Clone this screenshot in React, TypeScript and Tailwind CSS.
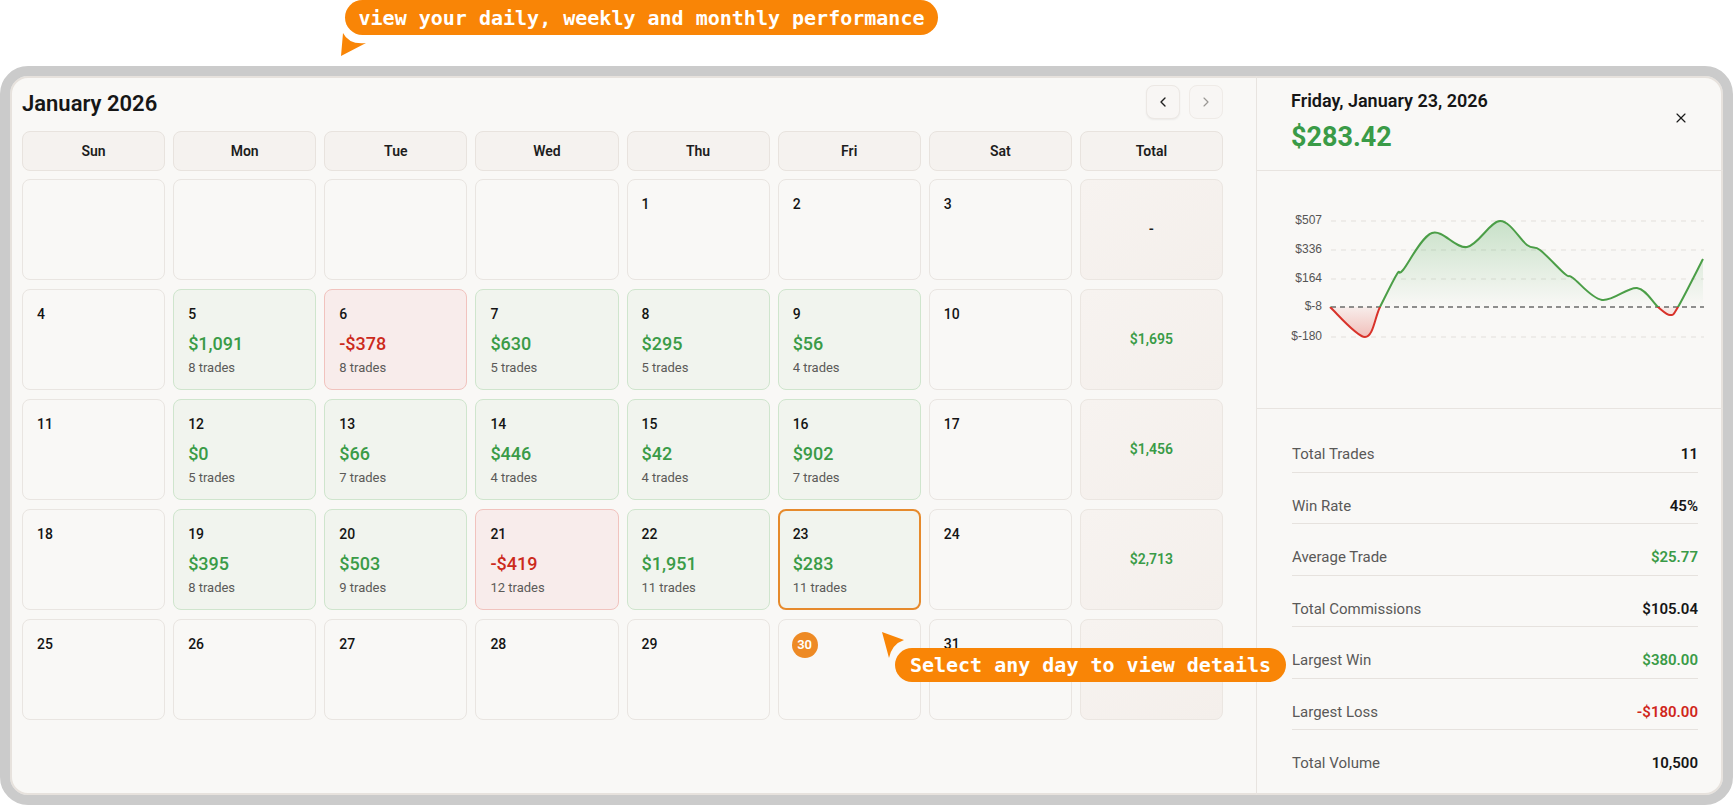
import { ChevronLeft, ChevronRight, X } from 'lucide-react'

type Day = {
  n?: number
  pnl?: string
  trades?: number
  tone?: 'win' | 'loss'
  selected?: boolean
  today?: boolean
}

type Week = { days: Day[]; total: string }

const weeks: Week[] = [
  { days: [{}, {}, {}, {}, { n: 1 }, { n: 2 }, { n: 3 }], total: '-' },
  {
    days: [
      { n: 4 },
      { n: 5, pnl: '$1,091', trades: 8, tone: 'win' },
      { n: 6, pnl: '-$378', trades: 8, tone: 'loss' },
      { n: 7, pnl: '$630', trades: 5, tone: 'win' },
      { n: 8, pnl: '$295', trades: 5, tone: 'win' },
      { n: 9, pnl: '$56', trades: 4, tone: 'win' },
      { n: 10 },
    ],
    total: '$1,695',
  },
  {
    days: [
      { n: 11 },
      { n: 12, pnl: '$0', trades: 5, tone: 'win' },
      { n: 13, pnl: '$66', trades: 7, tone: 'win' },
      { n: 14, pnl: '$446', trades: 4, tone: 'win' },
      { n: 15, pnl: '$42', trades: 4, tone: 'win' },
      { n: 16, pnl: '$902', trades: 7, tone: 'win' },
      { n: 17 },
    ],
    total: '$1,456',
  },
  {
    days: [
      { n: 18 },
      { n: 19, pnl: '$395', trades: 8, tone: 'win' },
      { n: 20, pnl: '$503', trades: 9, tone: 'win' },
      { n: 21, pnl: '-$419', trades: 12, tone: 'loss' },
      { n: 22, pnl: '$1,951', trades: 11, tone: 'win' },
      { n: 23, pnl: '$283', trades: 11, tone: 'win', selected: true },
      { n: 24 },
    ],
    total: '$2,713',
  },
  {
    days: [{ n: 25 }, { n: 26 }, { n: 27 }, { n: 28 }, { n: 29 }, { n: 30, today: true }, { n: 31 }],
    total: '',
  },
]

const weekdays = ['Sun', 'Mon', 'Tue', 'Wed', 'Thu', 'Fri', 'Sat', 'Total']

const stats: { label: string; value: string; color: string }[] = [
  { label: 'Total Trades', value: '11', color: 'text-[#161616]' },
  { label: 'Win Rate', value: '45%', color: 'text-[#161616]' },
  { label: 'Average Trade', value: '$25.77', color: 'text-[#3a9b47]' },
  { label: 'Total Commissions', value: '$105.04', color: 'text-[#161616]' },
  { label: 'Largest Win', value: '$380.00', color: 'text-[#3a9b47]' },
  { label: 'Largest Loss', value: '-$180.00', color: 'text-[#d0261b]' },
  { label: 'Total Volume', value: '10,500', color: 'text-[#161616]' },
]

// cumulative intraday P&L, already in chart coordinates
const curve: [number, number][] = [
  [40, 115], [75, 145], [90, 115], [107, 82], [113, 78], [142, 41], [177, 55],
  [210, 29], [237, 53], [250, 58], [275, 82], [283, 86], [312, 108], [347, 96],
  [368, 115], [380, 123], [388, 115], [413, 67],
]

const BASE = 115

function smooth(pts: [number, number][]) {
  let d = `M${pts[0][0]},${pts[0][1]}`
  for (let i = 0; i < pts.length - 1; i++) {
    const p0 = pts[i - 1] ?? pts[i]
    const p1 = pts[i]
    const p2 = pts[i + 1]
    const p3 = pts[i + 2] ?? p2
    const c1x = p1[0] + (p2[0] - p0[0]) / 6
    const c1y = p1[1] + (p2[1] - p0[1]) / 6
    const c2x = p2[0] - (p3[0] - p1[0]) / 6
    const c2y = p2[1] - (p3[1] - p1[1]) / 6
    d += ` C${c1x.toFixed(1)},${c1y.toFixed(1)} ${c2x.toFixed(1)},${c2y.toFixed(1)} ${p2[0]},${p2[1]}`
  }
  return d
}

function PnlChart() {
  const line = smooth(curve)
  const last = curve[curve.length - 1]
  const area = `${line} L${last[0]},${BASE} L${curve[0][0]},${BASE} Z`
  const ticks: [number, string][] = [
    [29, '$507'],
    [58, '$336'],
    [87, '$164'],
    [115, '$-8'],
    [145, '$-180'],
  ]

  return (
    <svg width="420" height="170" viewBox="0 0 420 170">
      <defs>
        <linearGradient id="gain" x1="0" y1="29" x2="0" y2={BASE} gradientUnits="userSpaceOnUse">
          <stop offset="0" stopColor="#4aa552" stopOpacity="0.28" />
          <stop offset="1" stopColor="#4aa552" stopOpacity="0" />
        </linearGradient>
        <linearGradient id="loss" x1="0" y1={BASE} x2="0" y2="145" gradientUnits="userSpaceOnUse">
          <stop offset="0" stopColor="#e0453a" stopOpacity="0.06" />
          <stop offset="1" stopColor="#e0453a" stopOpacity="0.32" />
        </linearGradient>
        <clipPath id="above">
          <rect x="0" y="0" width="420" height={BASE} />
        </clipPath>
        <clipPath id="below">
          <rect x="0" y={BASE} width="420" height={170 - BASE} />
        </clipPath>
      </defs>

      {ticks.map(([y, label]) => (
        <g key={label}>
          <text
            x="32"
            y={y}
            textAnchor="end"
            dominantBaseline="middle"
            fontSize="12"
            fill="#555"
            fontFamily="'Liberation Sans', sans-serif"
          >
            {label}
          </text>
          {y !== BASE && (
            <line x1="41" x2="414" y1={y} y2={y} stroke="#e2dfdb" strokeWidth="1" strokeDasharray="5 5" />
          )}
        </g>
      ))}

      <path d={area} fill="url(#gain)" clipPath="url(#above)" />
      <path d={area} fill="url(#loss)" clipPath="url(#below)" />
      <line x1="41" x2="414" y1={BASE} y2={BASE} stroke="#6b6b6b" strokeWidth="1.5" strokeDasharray="5 4" />
      <path d={line} fill="none" stroke="#4b9e47" strokeWidth="2" clipPath="url(#above)" />
      <path d={line} fill="none" stroke="#d8322a" strokeWidth="2" clipPath="url(#below)" />
    </svg>
  )
}

function DayCell({ day }: { day: Day }) {
  let tone = 'bg-[#f9f8f6] border border-[#e9e5e1]'
  if (day.tone === 'win') tone = 'bg-[#f1f4ee] border border-[#cfe5cd]'
  if (day.tone === 'loss') tone = 'bg-[#f8eceb] border border-[#f1c3be]'
  if (day.selected) tone = 'bg-[#f1f4ee] border-2 border-[#e68a2c]'

  return (
    <div className={`h-[101px] rounded-lg ${tone} ${day.selected ? 'px-[13px] pt-[11px]' : 'px-[14px] pt-[12px]'}`}>
      {day.today ? (
        <div className="-ml-[1px] flex h-[26px] w-[26px] items-center justify-center rounded-full bg-[#ee8a24] text-[13px] font-semibold text-white">
          {day.n}
        </div>
      ) : (
        day.n && <div className="h-[24px] text-[14px] font-medium leading-[24px] text-[#141414]">{day.n}</div>
      )}
      {day.pnl && (
        <>
          <div
            className={`mt-[6px] text-[18px] font-medium leading-[24px] ${
              day.tone === 'loss' ? 'text-[#cc2a1c]' : 'text-[#3a9b47]'
            }`}
          >
            {day.pnl}
          </div>
          <div className="mt-[3px] text-[13px] leading-[18px] text-[#5b5a58]">{day.trades} trades</div>
        </>
      )}
    </div>
  )
}

export default function App() {
  return (
    <div className="relative h-[807px] w-[1733px] overflow-hidden bg-white pt-[66px] font-['Roboto',sans-serif]">
      {/* top callout */}
      <div className="absolute left-[345px] top-0 flex h-[35px] w-[593px] items-center justify-center rounded-full bg-[#f98506] font-['DejaVu_Sans_Mono',monospace] text-[20px] font-bold text-white">
        view your daily, weekly and monthly performance
      </div>
      <svg className="absolute left-[336px] top-[30px]" width="34" height="30" viewBox="336 30 34 30">
        <path d="M343,33 L341,56 L366,43 Q349,45 343,33 Z" fill="#f98506" />
      </svg>

      <div className="flex h-[739px] rounded-[28px] border-[10px] border-[#cbcbcb] bg-[#f9f8f6] shadow-[inset_0_0_0_2px_#e7e2dd]">
        {/* calendar */}
        <div className="w-[1247px] shrink-0 border-r border-[#e8e4e0] pl-[12px] pt-[10px]">
          <div className="flex h-[34px] w-[1201px] items-center justify-between">
            <h2 className="text-[22px] font-semibold text-[#161616]">January 2026</h2>
            <div className="-mt-[2px] flex gap-[9px]">
              <button className="flex h-[34px] w-[34px] items-center justify-center rounded-lg border border-[#ece8e4] bg-[#f8f6f4] text-[#1f1f1f] shadow-[0_1px_2px_rgba(0,0,0,0.06)]">
                <ChevronLeft size={16} strokeWidth={2} />
              </button>
              <button className="flex h-[34px] w-[34px] items-center justify-center rounded-lg border border-[#efebe7] bg-[#f8f6f4] text-[#9a9794]">
                <ChevronRight size={16} strokeWidth={1.75} />
              </button>
            </div>
          </div>

          <div className="mt-[11px] grid w-[1201px] grid-cols-8 gap-2">
            {weekdays.map((d) => (
              <div
                key={d}
                className="flex h-[40px] items-center justify-center rounded-lg border border-[#e8e3de] bg-[#f5f2ef] text-[14px] font-semibold text-[#1d1d1d]"
              >
                {d}
              </div>
            ))}
          </div>

          <div className="mt-2 grid w-[1201px] grid-cols-8 gap-x-2 gap-y-[9px]">
            {weeks.map((w, wi) => (
              <div key={wi} className="contents">
                {w.days.map((d, di) => (
                  <DayCell key={di} day={d} />
                ))}
                <div className="flex h-[101px] items-center justify-center rounded-lg border border-[#ebe6e1] bg-gradient-to-br from-[#f7f3f0] to-[#f4efeb] text-[14px] font-semibold">
                  <span className={w.total === '-' ? 'text-[#1d1d1d]' : 'text-[#3a9b47]'}>{w.total}</span>
                </div>
              </div>
            ))}
          </div>
        </div>

        {/* selected day details */}
        <div className="flex-1">
          <div className="relative border-b border-[#e8e4e0] pb-[16px] pl-[34px] pt-[12px]">
            <div className="text-[18px] font-semibold leading-[26px] text-[#161616]">Friday, January 23, 2026</div>
            <div className="mt-[6px] text-[27px] font-bold leading-[34px] text-[#3a9b47]">$283.42</div>
            <button className="absolute right-[34px] top-[34px] text-[#1a1a1a]">
              <X size={16} strokeWidth={1.75} />
            </button>
          </div>

          <div className="h-[238px] border-b border-[#e8e4e0] pl-[33px] pt-[21px]">
            <PnlChart />
          </div>

          <div className="pl-[35px] pr-[25px] pt-[12px]">
            {stats.map((s, i) => (
              <div
                key={s.label}
                className={`flex items-center justify-between pb-[6.5px] pt-[22px] text-[15px] leading-[22px] ${
                  i < stats.length - 1 ? 'border-b border-[#e6e2de]' : ''
                }`}
              >
                <span className="text-[#5a5958]">{s.label}</span>
                <span className={`font-semibold ${s.color}`}>{s.value}</span>
              </div>
            ))}
          </div>
        </div>
      </div>

      {/* day selection callout */}
      <svg className="absolute left-[876px] top-[628px]" width="32" height="32" viewBox="876 628 32 32">
        <path d="M882,632 L904,640 Q892,644 889,658 Z" fill="#f98506" />
      </svg>
      <div className="absolute left-[895px] top-[648px] flex h-[34px] w-[391px] items-center justify-center rounded-full bg-[#f98506] font-['DejaVu_Sans_Mono',monospace] text-[20px] font-bold text-white">
        Select any day to view details
      </div>
    </div>
  )
}
